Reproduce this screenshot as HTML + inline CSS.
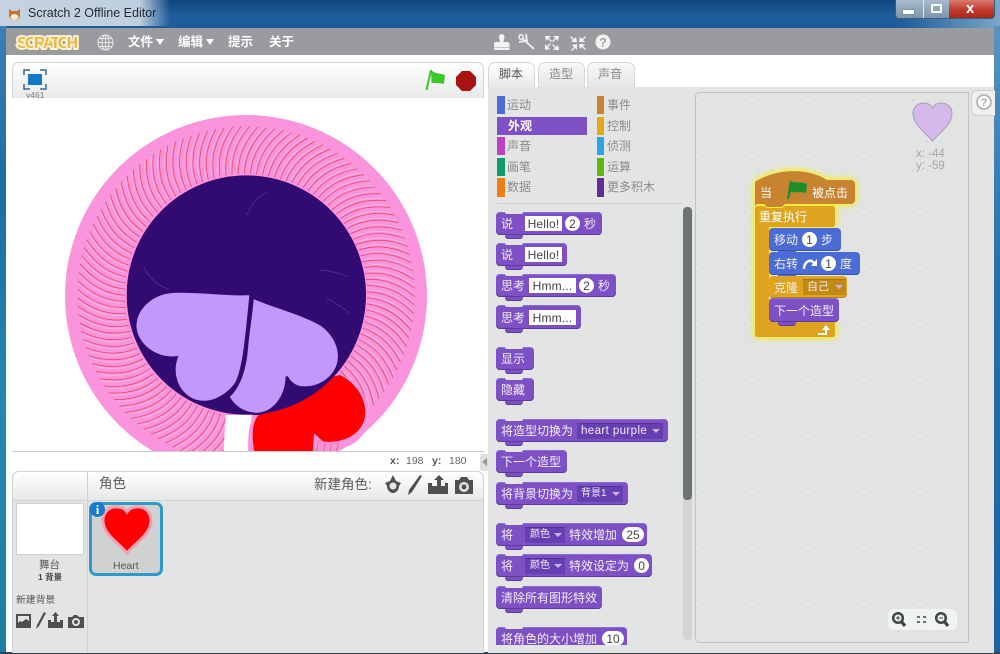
<!DOCTYPE html>
<html><head><meta charset="utf-8">
<style>
*{box-sizing:border-box}
html,body{margin:0;padding:0}
body{width:1000px;height:654px;overflow:hidden;position:relative;background:#1d5c99;font-family:"Liberation Sans","Noto Sans CJK SC",sans-serif;color:#555}
.a{position:absolute}
.t{position:absolute;white-space:nowrap;line-height:1}
.b{position:absolute;display:flex;align-items:center;padding-left:5px;gap:4px;border-radius:4px;color:#f3eefb;font-size:12px;white-space:nowrap;background:#7d50c6;box-shadow:inset 0 -1px 0 #5c3a9c,inset 0 1px 0 #8f6cd2}
.b:after{content:"";position:absolute;left:9px;bottom:-3px;width:18px;height:3px;background:inherit;border-radius:0 0 5px 5px;box-shadow:0 1px 0 #5c3a9c}
.b:before{content:"";position:absolute;left:9px;top:0;width:18px;height:2px;background:#e3e5e5;border-radius:0 0 5px 5px}
.s:before{display:none}
.i,.n{background:#fff;color:#444;height:15px;line-height:16px;text-align:center;font-size:12px;display:inline-block;letter-spacing:.2px}
.n{border-radius:8px;letter-spacing:0}
.d{background:#663fb0;color:#f0eafa;height:16px;line-height:16px;font-size:11px;display:inline-block;padding-left:4px;position:relative;box-shadow:inset 0 1px 0 #53329a}
.d:after{content:"";position:absolute;right:3px;top:6px;border:4px solid transparent;border-top:4px solid #c8b8e8;border-bottom:0}
.cat{position:absolute;font-size:12px;color:#8a8c8c;line-height:1;white-space:nowrap}
.bar{position:absolute;width:8px}
</style></head>
<body>
<!-- window chrome -->
<div class="a" style="left:0;top:0;width:1000px;height:28px;background:linear-gradient(180deg,#12467c 0,#1f5e9e 60%,#1c5a98 100%)"></div>
<div class="a" style="left:0;top:0;width:170px;height:26px;background:linear-gradient(90deg,#cfd9e4 0,#c8d6e4 82%,rgba(170,195,220,0) 100%);opacity:.95"></div>
<div class="a" style="left:900px;top:0;width:100px;height:28px;background:linear-gradient(90deg,rgba(120,170,210,0),#7aa6c9)"></div>
<div class="a" style="left:0;top:26px;width:7px;height:628px;background:linear-gradient(180deg,#3d7fb5 0,#1d6d9e 25%,#2487ad 60%,#1f7f9f 100%)"></div>
<div class="a" style="left:994px;top:26px;width:6px;height:628px;background:linear-gradient(180deg,#5b93bd 0,#2a6ea8 40%,#1f62a0 100%)"></div>
<div class="a" style="left:0;top:652px;width:1000px;height:2px;background:#2f4656"></div>
<!-- title -->
<svg class="a" style="left:7px;top:6px" width="16" height="16" viewBox="0 0 16 16"><path d="M2 3l3 2h5l3-2v6c0 4-3 5-5.500 5S2 13 2 9z" fill="#c9742c"/><ellipse cx="7.500" cy="11" rx="4" ry="3" fill="#f6ead8"/></svg>
<div class="t" style="left:28px;top:7px;font-size:12.500px;color:#262b30">Scratch 2 Offline Editor</div>
<!-- window buttons -->
<div class="a" style="left:895px;top:0;width:100px;height:19px;border:1px solid #3d5c7c;border-top:0;border-radius:0 0 4px 4px;background:linear-gradient(180deg,#a9bccd,#8fa6bb 50%,#7d95ab)"></div>
<div class="a" style="left:949px;top:0;width:45px;height:18px;border-radius:0 0 3px 0;background:linear-gradient(180deg,#d9796c,#c0392b 55%,#a52a1e)"></div>
<div class="a" style="left:923px;top:0;width:1px;height:18px;background:#dde6ee"></div>
<div class="a" style="left:903px;top:10px;width:11px;height:4px;background:#fff;box-shadow:0 0 1px #234"></div>
<div class="a" style="left:931px;top:4px;width:11px;height:9px;border:2px solid #fff"></div>
<div class="t" style="left:966px;top:1px;font-size:15px;font-weight:bold;color:#fff">x</div>
<!-- main -->
<div class="a" style="left:6px;top:28px;width:988px;height:624px;background:#fff"></div>
<div class="a" style="left:6px;top:28px;width:988px;height:27px;background:#9a9b9e"></div>
<svg class="a" style="left:14px;top:30px" width="68" height="23" viewBox="0 0 68 23"><text x="3" y="18" font-family="Liberation Sans" font-size="15.500" font-weight="bold" textLength="61" lengthAdjust="spacing" fill="#ecb544" stroke="#fdf1cf" stroke-width="4" stroke-linejoin="round" paint-order="stroke">SCRATCH</text></svg>
<svg class="a" style="left:97px;top:34px" width="17" height="17" viewBox="0 0 17 17" fill="none" stroke="#e8e8e8" stroke-width="1"><circle cx="8.500" cy="8.500" r="7.500"/><ellipse cx="8.500" cy="8.500" rx="3.500" ry="7.500"/><path d="M1 8.500h15M2 4.500h13M2 12.500h13M8.500 1v15"/></svg>
<div class="t" style="left:128px;top:36px;font-size:12.500px;color:#fff;font-weight:bold">文件</div>
<div class="a" style="left:156px;top:39px;border:4px solid transparent;border-top:6px solid #fff;border-bottom:0"></div>
<div class="t" style="left:178px;top:36px;font-size:12.500px;color:#fff;font-weight:bold">编辑</div>
<div class="a" style="left:206px;top:39px;border:4px solid transparent;border-top:6px solid #fff;border-bottom:0"></div>
<div class="t" style="left:228px;top:36px;font-size:12.500px;color:#fff;font-weight:bold">提示</div>
<div class="t" style="left:269px;top:36px;font-size:12.500px;color:#fff;font-weight:bold">关于</div>
<!-- top tools -->
<svg class="a" style="left:492px;top:32px" width="120" height="20" viewBox="0 0 120 20" fill="#f2f2f2">
<path d="M9.500 2a3 3 0 0 1 3 3c0 2-1 3-1 5h4c1 0 2 1 2 2v3H2v-3c0-1 1-2 2-2h4c0-2-1-3-1-5a3 3 0 0 1 2.500-3z"/>
<path d="M2 15.500h15.500v2.500H2z"/>
<circle cx="29" cy="5" r="2.200" fill="none" stroke="#f2f2f2" stroke-width="1.500"/>
<path d="M30.500 6.500L42 17M35 9.500l-1-7.500M33 9L27 10" fill="none" stroke="#f2f2f2" stroke-width="1.800"/>
<path d="M53 4h6l-2 2 3 3-1 1-3-3-2 2zM67 4h-6l2 2-3 3 1 1 3-3 2 2zM53 18v-6l2 2 3-3 1 1-3 3 2 2zM67 18h-6l2-2-3-3 1-1 3 3 2-2z"/>
<path d="M85 10h-6l2-2-3-3 1-1 3 3 2-2zM87 10h6l-2-2 3-3-1-1-3 3-2-2zM85 12v6l-2-2-3 3-1-1 3-3-2-2zM87 12h6l-2 2 3 3-1 1-3-3-2 2z"/>
<circle cx="111" cy="10" r="7.500"/>
<text x="111" y="14.500" font-family="Liberation Sans" font-size="12" font-weight="bold" text-anchor="middle" fill="#9a9b9e">?</text>
</svg>

<!-- stage panel -->
<div class="a" style="left:12px;top:62px;width:472px;height:37px;border:1px solid #d4d6d6;border-bottom:1px solid #c4c6c6;border-radius:7px 7px 0 0;background:linear-gradient(180deg,#fff,#e8eaea)"></div>
<svg class="a" style="left:22px;top:68px" width="26" height="23" viewBox="0 0 26 23" fill="none"><path d="M2 7V2h6M18 2h6v5M2 16v5h6M18 21h6v-5" stroke="#35688e" stroke-width="1.500"/><rect x="6" y="6" width="14" height="11" fill="#1279c4"/></svg>
<div class="t" style="left:26px;top:91px;font-size:8.500px;color:#777">v461</div>
<svg class="a" style="left:422px;top:68px" width="26" height="24" viewBox="0 0 26 24"><path d="M9 2C13 6 18 5 23 7l-1 9c-5-1-9-1-12.500-1z" fill="#3dc72a"/><path d="M4.500 22L9 2" stroke="#3dc72a" stroke-width="2"/></svg>
<svg class="a" style="left:455px;top:70px" width="22" height="22" viewBox="0 0 22 22"><path d="M7 1h8l6 6v8l-6 6H7l-6-6V7z" fill="#a81212"/></svg>

<!-- stage -->
<svg class="a" style="left:12px;top:98px" width="472" height="354" viewBox="12 98 472 354">
<defs>
<g id="l"><path d="M372-14Q440-14 500 45" fill="none" stroke="#ffb4dc" stroke-width="3"/><path d="M362-28Q440-30 505 30" fill="none" stroke="#ea3d5e" stroke-width="2.200"/></g>
<g id="a1"><use href="#l"/><use href="#l" transform="rotate(2.88)"/><use href="#l" transform="rotate(5.76)"/><use href="#l" transform="rotate(8.64)"/><use href="#l" transform="rotate(11.52)"/></g>
<g id="a2"><use href="#a1"/><use href="#a1" transform="rotate(14.4)"/><use href="#a1" transform="rotate(28.8)"/><use href="#a1" transform="rotate(43.2)"/><use href="#a1" transform="rotate(57.6)"/></g>
<g id="a3"><use href="#a2"/><use href="#a2" transform="rotate(72)"/><use href="#a2" transform="rotate(144)"/><use href="#a2" transform="rotate(216)"/><use href="#a2" transform="rotate(288)"/></g>
</defs>
<rect x="12" y="98" width="472" height="354" fill="#fff"/>
<g transform="translate(60 100) scale(.33333)">
<circle cx="558" cy="588" r="543" fill="#fa94dc"/>
<g transform="translate(558 585)"><use href="#a3"/></g>
<path d="M490 1070L497 945H575L566 1070Z" fill="#fff"/>
<path d="M566 1070C560 1000 570 950 600 925L700 860L830 820C890 830 935 900 925 960C915 1020 870 1050 800 1050L820 1070Z" fill="#fa94dc"/>
<path d="M840 825C890 850 922 900 915 950C905 1005 850 1030 790 1025L762 1000L758 1060H584C572 1000 578 960 600 940L680 860Z" fill="#ff0000"/>
<path d="M775 1022L770 1055M795 1028L790 1055M815 1030L810 1055M835 1030L828 1055" stroke="#f0506a" stroke-width="2"/>
<circle cx="559" cy="585" r="359" fill="#310a72"/>
<path d="M250 500C270 535 290 555 325 568M560 345C575 310 600 285 625 275M780 510C810 512 840 520 865 530M800 595C830 610 850 625 870 640" fill="none" stroke="#5a3a90" stroke-width="2"/>
<path d="M578 592C640 620 725 640 785 675C825 705 842 745 836 785C825 835 775 868 722 862C700 858 688 845 680 830C680 885 645 940 590 942C550 940 522 920 505 890C540 860 557 800 561 740C565 690 575 640 578 592Z" fill="#c398fb" stroke="#310a72" stroke-width="7"/>
<path d="M572 582C500 586 420 572 340 575C270 580 224 630 226 682C230 735 290 780 350 772C335 815 345 870 395 898C445 920 495 892 525 855C552 815 560 700 572 582Z" fill="#c398fb" stroke="#310a72" stroke-width="7"/>
</g>
</svg>
<div class="a" style="left:12px;top:451px;width:472px;height:1px;background:#c8caca"></div>
<div class="t" style="left:390px;top:456px;font-size:10.500px;font-weight:bold;color:#555">x:</div>
<div class="t" style="left:406px;top:456px;font-size:10.500px;color:#666">198</div>
<div class="t" style="left:432px;top:456px;font-size:10.500px;font-weight:bold;color:#555">y:</div>
<div class="t" style="left:449px;top:456px;font-size:10.500px;color:#666">180</div>
<div class="a" style="left:480px;top:454px;width:10px;height:17px;background:#dfe1e1;border-radius:3px"></div>
<div class="a" style="left:482px;top:458px;border:4px solid transparent;border-right:5px solid #999;border-left:0"></div>

<!-- sprites panel -->
<div class="a" style="left:12px;top:471px;width:472px;height:182px;background:#e3e5e5;border:1px solid #d2d4d4;border-bottom:0;border-radius:7px 7px 0 0"></div>
<div class="a" style="left:12px;top:471px;width:472px;height:30px;background:linear-gradient(180deg,#fff,#e6e8e8);border:1px solid #d2d4d4;border-radius:7px 7px 0 0"></div>
<div class="a" style="left:87px;top:471px;width:1px;height:182px;background:#cfd1d1"></div>
<div class="t" style="left:99px;top:477px;font-size:13.500px;color:#5a5a5a">角色</div>
<div class="t" style="left:314px;top:478px;font-size:13.500px;color:#5a5a5a">新建角色:</div>
<svg class="a" style="left:384px;top:473px" width="92" height="24" viewBox="0 0 92 24" fill="#505050">
<path d="M1 10l5-2 3-6 3 6 5 2-2 3c0 4-3 7-6 7s-6-3-6-7z"/><circle cx="9" cy="13" r="3.500" fill="#e3e5e5"/>
<path d="M24 22l1-5L36 2l2 1-10 16z"/>
<path d="M44 21V10h4v3h5V7h-3l5-5 5 5h-3v6h4v-3h3v11z"/>
<path d="M75 7l2-3h6l2 3h4v14H71V7z"/><circle cx="80" cy="14" r="5" fill="#e3e5e5"/><circle cx="80" cy="14" r="2.500"/>
</svg>
<div class="a" style="left:16px;top:503px;width:68px;height:52px;background:#fff;border:1px solid #cfd1d1"></div>
<div class="t" style="left:39px;top:560px;font-size:10.500px;color:#555">舞台</div>
<div class="t" style="left:38px;top:573px;font-size:8.500px;color:#444;font-weight:bold">1 背景</div>
<div class="t" style="left:16px;top:596px;font-size:9.800px;color:#555">新建背景</div>
<svg class="a" style="left:15px;top:611px" width="70" height="19" viewBox="0 0 70 19" fill="#4f4f4f">
<path d="M1 3h15v14H1z"/><path d="M3 5h11v5l-3-2-4 3-2-1-2 2z" fill="#e3e5e5"/>
<path d="M21 18l1-4L29 1l2 1-7 13z"/>
<path d="M33 17V9h3v2h3V5h-2l3.500-4L44 5h-2v6h3V9h3v8z"/>
<path d="M57 6l2-2h3l2 2h5v11H53V6z"/><circle cx="61" cy="11" r="4" fill="#e3e5e5"/><circle cx="61" cy="11" r="2"/>
</svg>
<div class="a" style="left:89px;top:502px;width:74px;height:74px;border:3px solid #2a9bcb;border-radius:7px;background:#d0d1d1"></div>
<svg class="a" style="left:100px;top:504px" width="54" height="52" viewBox="0 0 54 52"><path d="M27 49C18 38 2 30 3 15C4 6 11 2 18 3C22 3 25 5 27 8C29 5 32 3 36 3C43 2 50 6 51 15C52 30 36 38 27 49Z" fill="#ff0000" stroke="#f0a0b0" stroke-width="3"/></svg>
<div class="a" style="left:90px;top:502px;width:15px;height:15px;border-radius:50%;background:#1878cc;color:#fff;font-family:'Liberation Serif';font-weight:bold;font-size:13px;line-height:15px;text-align:center">i</div>
<div class="t" style="left:113px;top:561px;font-size:10.500px;color:#555">Heart</div>

<!-- tabs -->
<div class="a" style="left:488px;top:87px;width:506px;height:566px;background:#e3e5e5"></div>
<div class="a" style="left:488px;top:62px;width:47px;height:27px;background:linear-gradient(180deg,#fff,#e6e8e8);border:1px solid #d4d6d6;border-bottom:0;border-radius:7px 7px 0 0"></div>
<div class="a" style="left:538px;top:62px;width:47px;height:26px;background:linear-gradient(180deg,#f8f8f8,#e3e5e5);border:1px solid #d4d6d6;border-bottom:0;border-radius:7px 7px 0 0"></div>
<div class="a" style="left:587px;top:62px;width:48px;height:26px;background:linear-gradient(180deg,#f8f8f8,#e3e5e5);border:1px solid #d4d6d6;border-bottom:0;border-radius:7px 7px 0 0"></div>
<div class="t" style="left:499px;top:68px;font-size:12px;color:#555">脚本</div>
<div class="t" style="left:549px;top:68px;font-size:12px;color:#8a8c8c">造型</div>
<div class="t" style="left:598px;top:68px;font-size:12px;color:#8a8c8c">声音</div>

<!-- categories -->
<div class="bar" style="left:497px;top:96px;height:18px;background:#4a6cd4"></div>
<div class="bar" style="left:497px;top:117px;width:90px;height:18px;background:#7d50c6"></div>
<div class="bar" style="left:497px;top:137px;height:18px;background:#bb42c3"></div>
<div class="bar" style="left:497px;top:158px;height:18px;background:#0e9a6c"></div>
<div class="bar" style="left:497px;top:178px;height:19px;background:#ee7d16"></div>
<div class="bar" style="left:597px;top:96px;width:7px;height:18px;background:#c88330"></div>
<div class="bar" style="left:597px;top:117px;width:7px;height:18px;background:#e1a91a"></div>
<div class="bar" style="left:597px;top:137px;width:7px;height:18px;background:#2ca5e2"></div>
<div class="bar" style="left:597px;top:158px;width:7px;height:18px;background:#5cb712"></div>
<div class="bar" style="left:597px;top:178px;width:7px;height:19px;background:#632d99"></div>
<div class="cat" style="left:507px;top:99px">运动</div>
<div class="cat" style="left:508px;top:120px;color:#fff;font-weight:bold">外观</div>
<div class="cat" style="left:507px;top:140px">声音</div>
<div class="cat" style="left:507px;top:161px">画笔</div>
<div class="cat" style="left:507px;top:181px">数据</div>
<div class="cat" style="left:607px;top:99px">事件</div>
<div class="cat" style="left:607px;top:120px">控制</div>
<div class="cat" style="left:607px;top:140px">侦测</div>
<div class="cat" style="left:607px;top:161px">运算</div>
<div class="cat" style="left:607px;top:181px">更多积木</div>
<div class="a" style="left:497px;top:203px;width:186px;height:1px;background:#cfd1d1"></div>

<!-- palette -->
<div class="a" style="left:683px;top:207px;width:9px;height:433px;background:#d3d5d5;border-radius:4px"></div>
<div class="a" style="left:683px;top:207px;width:9px;height:293px;background:#707375;border-radius:4px"></div>
<div class="b" style="left:496px;top:212px;width:106px;height:23px">说<span class="i" style="width:37px;margin-left:8px">Hello!</span><span class="n" style="width:15px;margin-left:-1px">2</span>秒</div>
<div class="b" style="left:496px;top:243px;width:71px;height:23px">说<span class="i" style="width:37px;margin-left:8px">Hello!</span></div>
<div class="b" style="left:496px;top:274px;width:120px;height:23px">思考<span class="i" style="width:47px">Hmm...</span><span class="n" style="width:15px;margin-left:-1px">2</span>秒</div>
<div class="b" style="left:496px;top:305px;width:85px;height:24px">思考<span class="i" style="width:47px">Hmm...</span></div>
<div class="b" style="left:496px;top:347px;width:38px;height:23px">显示</div>
<div class="b" style="left:496px;top:378px;width:38px;height:23px">隐藏</div>
<div class="b" style="left:496px;top:419px;width:172px;height:23px">将造型切换为<span class="d" style="width:86px;font-size:11.500px;letter-spacing:.4px">heart purple</span></div>
<div class="b" style="left:496px;top:450px;width:71px;height:23px">下一个造型</div>
<div class="b" style="left:496px;top:482px;width:132px;height:23px">将背景切换为<span class="d" style="width:46px;font-size:10px">背景1</span></div>
<div class="b" style="left:496px;top:523px;width:151px;height:23px">将<span class="d" style="width:40px;margin-left:8px;font-size:10px;padding-left:5px">颜色</span>特效增加<span class="n" style="width:22px;margin-left:1px">25</span></div>
<div class="b" style="left:496px;top:554px;width:156px;height:23px">将<span class="d" style="width:40px;margin-left:8px;font-size:10px;padding-left:5px">颜色</span>特效设定为<span class="n" style="width:15px;margin-left:1px">0</span></div>
<div class="b" style="left:496px;top:586px;width:106px;height:23px">清除所有图形特效</div>
<div class="a" style="left:490px;top:620px;width:190px;height:25px;overflow:hidden"><div class="b" style="left:6px;top:7px;width:131px;height:23px">将角色的大小增加<span class="n" style="width:22px;margin-left:1px">10</span></div></div>

<!-- scripts area -->
<div class="a" style="left:695px;top:92px;width:274px;height:551px;background-color:#e2e4e4;background-image:radial-gradient(#d8dada 1px,transparent 1.200px);background-size:14px 14px;border:1px solid #c2c4c4;border-radius:4px 0 0 4px"></div>
<div class="a" style="left:971px;top:90px;width:24px;height:26px;background:#eef0f0;border:1px solid #cfd1d1;border-right:0;border-radius:6px 0 0 6px"></div>
<svg class="a" style="left:975px;top:93px" width="18" height="18" viewBox="0 0 18 18"><circle cx="9" cy="9" r="7" fill="#fff" stroke="#a8aaaa" stroke-width="1.500"/><text x="9" y="13" font-family="Liberation Sans" font-size="11" font-weight="bold" text-anchor="middle" fill="#a8aaaa">?</text></svg>
<svg class="a" style="left:910px;top:100px" width="45" height="44" viewBox="0 0 45 44"><path d="M22.500 41C15 32 3 25 3 13C3 6 9 3 14 3C18 3 21 5 22.500 8C24 5 27 3 31 3C36 3 42 6 42 13C42 25 30 32 22.500 41Z" fill="#d5b9ec" stroke="#a79cb4" stroke-width="1"/></svg>
<div class="t" style="left:916px;top:149px;font-size:11.500px;color:#a5a7a7">x: -44</div>
<div class="t" style="left:916px;top:161px;font-size:11.500px;color:#a5a7a7">y: -59</div>

<!-- script stack -->
<div class="a" style="left:0;top:0;width:1000px;height:654px;filter:drop-shadow(0 0 3px #f4ee3a) drop-shadow(0 0 3px #f4ee3a)">
<svg class="a" style="left:755px;top:168px" width="100" height="40" viewBox="0 0 100 40"><path d="M0 38V14C18 2 50-2 72 12H96c2 0 4 2 4 4V32c0 2-2 4-4 4H30l-3 3H12L9 36H2z" fill="#c88330"/></svg>
<svg class="a" style="left:755px;top:206px" width="81" height="134" viewBox="0 0 81 134"><path d="M3 0H9L12 2H27L30 0H77c2 0 3 1 3 3V19c0 1-1 2-3 2H14V115H77c2 0 3 1 3 3V128c0 2-1 3-3 3H3c-2 0-3-1-3-3V3C0 1 1 0 3 0z" fill="#dea420"/></svg>
</div>
<div class="t" style="left:760px;top:187px;font-size:12px;color:#fff">当</div>
<svg class="a" style="left:785px;top:178px" width="24" height="22" viewBox="0 0 24 22"><path d="M2 21L5 2c4 4 9 1 17 4l-1 9c-6-2-11 0-15-1l-2 7z" fill="#1f8d2a"/></svg>
<div class="t" style="left:812px;top:187px;font-size:12px;color:#fff">被点击</div>
<div class="t" style="left:759px;top:211px;font-size:12px;color:#fff">重复执行</div>
<div class="b s" style="left:769px;top:228px;width:72px;height:23px;background:#4a6cd4;box-shadow:inset 0 -1px 0 #3a54a8">移动<span class="n" style="width:15px">1</span>步</div>
<div class="b s" style="left:769px;top:252px;width:91px;height:23px;background:#4a6cd4;box-shadow:inset 0 -1px 0 #3a54a8">右转<svg width="16" height="14" viewBox="0 0 16 14" fill="none"><path d="M2 12C2 6 6 3 10 4L13 7" stroke="#fff" stroke-width="2.500"/><path d="M15 2v7H9z" fill="#fff"/></svg><span class="n" style="width:15px;margin-left:-1px">1</span>度</div>
<div class="b s" style="left:769px;top:276px;width:78px;height:22px;background:#dea420;box-shadow:inset 0 -1px 0 #b0801a;gap:5px">克隆<span class="d" style="width:43px;background:#c28a14;box-shadow:inset 0 1px 0 #a5750f">自己</span></div>
<div class="b s" style="left:769px;top:298px;width:70px;height:24px">下一个造型</div>
<svg class="a" style="left:817px;top:324px" width="16" height="12" viewBox="0 0 16 12"><path d="M1 10H9V5" fill="none" stroke="#fff" stroke-width="2"/><path d="M5 6L9 1l4 5z" fill="#fff"/></svg>

<!-- zoom ctrl -->
<div class="a" style="left:888px;top:609px;width:69px;height:21px;background:#f1f2f2;border-radius:6px"></div>
<svg class="a" style="left:890px;top:611px" width="66" height="18" viewBox="0 0 66 18" fill="none" stroke="#3d4545"><circle cx="8" cy="7" r="4.800" stroke-width="2.500"/><path d="M11 10l4 5" stroke-width="3.200"/><path d="M6 7h4M8 5v4" stroke-width="1"/><path d="M27 6h3M27 11h3M33 6h3M33 11h3" stroke-width="1.600"/><circle cx="51" cy="7" r="4.800" stroke-width="2.500"/><path d="M54 10l4 5" stroke-width="3.200"/><path d="M49 7h4" stroke-width="1"/></svg>
</body></html>
